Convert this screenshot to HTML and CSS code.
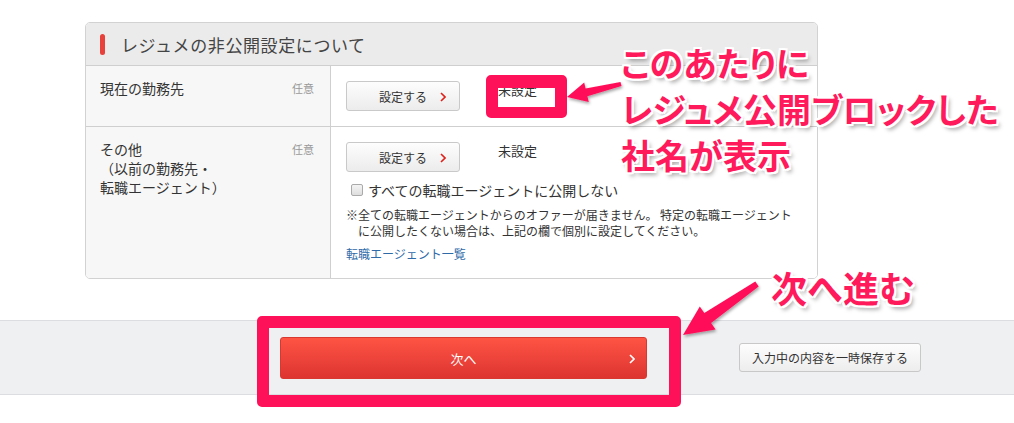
FILE: index.html
```html
<!DOCTYPE html>
<html lang="ja">
<head>
    <meta charset="UTF-8">
    <meta name="viewport" content="width=device-width, initial-scale=1.0">
    <title>レジュメの非公開設定</title>
    <link rel="stylesheet" href="styles.css">
</head>
<body>
    <div class="page">
        <div class="card">
            <div class="card-header">
                <span class="bar"></span>
                <h2>レジュメの非公開設定について</h2>
            </div>
            <div class="row">
                <div class="row-label">
                    <span>現在の勤務先</span>
                    <span class="optional">任意</span>
                </div>
                <div class="row-body">
                    <div class="setting">
                        <button type="button" class="btn-set">設定する
                            <svg class="chev" width="6" height="10" viewBox="0 0 6 10"><polyline points="1,1 5,5 1,9" fill="none" stroke="#e0201a" stroke-width="1.6"/></svg>
                        </button>
                        <span class="status">未設定</span>
                    </div>
                </div>
            </div>
            <div class="row last">
                <div class="row-label">
                    <span>その他<br>（以前の勤務先・<br>転職エージェント）</span>
                    <span class="optional">任意</span>
                </div>
                <div class="row-body">
                    <div class="setting">
                        <button type="button" class="btn-set">設定する
                            <svg class="chev" width="6" height="10" viewBox="0 0 6 10"><polyline points="1,1 5,5 1,9" fill="none" stroke="#e0201a" stroke-width="1.6"/></svg>
                        </button>
                        <span class="status">未設定</span>
                    </div>
                    <label class="check"><span class="box"></span>すべての転職エージェントに公開しない</label>
                    <p class="note">※全ての転職エージェントからのオファーが届きません。 特定の転職エージェント<br>に公開したくない場合は、上記の欄で個別に設定してください。</p>
                    <a href="#" class="agent-link">転職エージェント一覧</a>
                </div>
            </div>
        </div>
    </div>

    <div class="footer-band">
        <button type="button" class="btn-next">次へ
            <svg class="chev-next" width="6" height="10" viewBox="0 0 6 10"><polyline points="1,1 5,5 1,9" fill="none" stroke="#fff" stroke-width="1.6"/></svg>
        </button>
        <button type="button" class="btn-save">入力中の内容を一時保存する</button>
    </div>

    <!-- 注釈 -->
    <div class="mark mark-status"></div>
    <div class="mark mark-next"></div>
    <svg class="arrows" width="1014" height="423" viewBox="0 0 1014 423">
        <defs>
            <filter id="shadow" x="-20%" y="-20%" width="140%" height="140%">
                <feDropShadow dx="1" dy="2" stdDeviation="1.5" flood-color="#000" flood-opacity="0.35"/>
            </filter>
        </defs>
        <polygon filter="url(#shadow)" fill="#ff1159" points="567,97 584.2,82.6 585.6,88.4 620.5,82 621.5,86 587.4,96.2 588.8,102"/>
        <polygon filter="url(#shadow)" fill="#ff1159" points="683,335 699.8,306.5 704.3,313.1 755.3,281.5 758.7,286.5 711.1,322.9 715.6,329.5"/>
    </svg>
    <p class="callout callout-top">このあたりに<br>レジュメ公開ブロックした<br>社名が表示</p>
    <p class="callout callout-next">次へ進む</p>
</body>
</html>
```

FILE: styles.css
```css
/* 全体 */
body {
    margin: 0;
    background-color: white;
    font-family: "Noto Sans CJK JP", "Noto Sans", sans-serif;
    color: #333;
    position: relative;
    width: 1014px;
    height: 423px;
    overflow: hidden;
}
.page {
    padding: 22px 0 0 85px;
    height: 298px;
    box-sizing: border-box;
}
.card {
    width: 733px;
    border: 1px solid #d2d2d2;
    border-radius: 5px;
    box-sizing: border-box;
    overflow: hidden;
}
.card-header {
    display: flex;
    align-items: center;
    height: 42px;
    background-color: #ebebeb;
    border-bottom: 1px solid #cfcfcf;
    padding-left: 14px;
}
.bar {
    width: 5px;
    height: 21px;
    border-radius: 3px;
    background-color: #e8403a;
    margin-right: 16px;
}
.card-header h2 {
    margin: 0;
    font-size: 17px;
    font-weight: normal;
    color: #444;
    letter-spacing: 0.6px;
}
.row {
    display: flex;
    border-bottom: 1px solid #cfcfcf;
}
.row.last {
    border-bottom: none;
}
.row-label {
    width: 245px;
    flex-shrink: 0;
    box-sizing: border-box;
    background-color: #f7f7f7;
    border-right: 1px solid #cfcfcf;
    display: flex;
    justify-content: space-between;
    align-items: flex-start;
    padding: 13px 16px 0 14px;
    font-size: 14px;
    line-height: 19px;
    color: #333;
}
.optional {
    font-size: 11px;
    color: #999;
    line-height: 14px;
    margin-top: 2px;
}
.row-body {
    flex: 1;
    padding: 15px 0 15px 15px;
    background-color: #fff;
}
.row.last .row-body {
    padding-bottom: 16px;
}
.setting {
    display: flex;
    align-items: flex-start;
}
.btn-set {
    position: relative;
    width: 114px;
    height: 30px;
    border: 1px solid #c9c9c9;
    border-radius: 3px;
    background: linear-gradient(#fdfdfd, #ececec);
    font-family: inherit;
    font-size: 12px;
    color: #333;
    padding: 0;
    cursor: pointer;
}
.chev {
    position: absolute;
    right: 13px;
    top: 10px;
}
.status {
    margin-left: 38px;
    font-size: 13px;
    line-height: 18px;
}
.check {
    display: flex;
    align-items: center;
    margin-top: 8px;
    margin-left: 5px;
    font-size: 14px;
    line-height: 20px;
    color: #333;
}
.box {
    width: 10px;
    height: 10px;
    border: 1px solid #aaa;
    border-radius: 2px;
    background: linear-gradient(#f4f4f4, #dedede);
    margin-right: 5px;
}
.note {
    margin: 7px 0 0;
    font-size: 12px;
    line-height: 16px;
    color: #333;
    padding-left: 12px;
    text-indent: -12px;
}
.agent-link {
    display: block;
    margin-top: 7px;
    font-size: 12px;
    line-height: 16px;
    color: #2f6aa8;
    text-decoration: none;
}

/* フッター */
.footer-band {
    display: flex;
    align-items: center;
    height: 73px;
    margin-top: 22px;
    background-color: #eff0f2;
    border-top: 1px solid #dcdde0;
    border-bottom: 1px solid #dcdde0;
    padding-left: 280px;
}
.btn-next {
    position: relative;
    width: 367px;
    height: 42px;
    border: 1px solid #d8382f;
    border-radius: 3px;
    background: linear-gradient(#fe5444, #dd3431);
    color: white;
    font-family: inherit;
    font-size: 13px;
    cursor: pointer;
    margin-top: 1px;
}
.chev-next {
    position: absolute;
    right: 11px;
    top: 16px;
}
.btn-save {
    margin-left: 92px;
    width: 182px;
    height: 29px;
    border: 1px solid #c8c8c8;
    border-radius: 3px;
    background: linear-gradient(#fdfdfd, #ededed);
    font-family: inherit;
    font-size: 12px;
    color: #333;
    cursor: pointer;
}

/* 注釈 */
.mark {
    position: absolute;
    border: 12px solid #ff1159;
    border-radius: 5px;
    box-sizing: border-box;
}
.mark-status {
    left: 486px;
    top: 75px;
    width: 81px;
    height: 43px;
    border-top-width: 13px;
    border-bottom-width: 11px;
}
.mark-next {
    left: 257px;
    top: 316px;
    width: 424px;
    height: 91px;
}
.arrows {
    position: absolute;
    left: 0;
    top: 0;
    pointer-events: none;
}
.callout {
    position: absolute;
    margin: 0;
    font-weight: bold;
    color: #ff1a5c;
    font-size: 34px;
    font-feature-settings: "palt";
    text-shadow:
        2px 0 0 #fff, -2px 0 0 #fff, 0 2px 0 #fff, 0 -2px 0 #fff,
        2px 2px 0 #fff, -2px -2px 0 #fff, 2px -2px 0 #fff, -2px 2px 0 #fff,
        3px 4px 4px rgba(0, 0, 0, 0.35);
    white-space: nowrap;
}
.callout-top {
    left: 621px;
    top: 40px;
    line-height: 46px;
}
.callout-next {
    left: 771px;
    top: 264px;
    line-height: 46px;
    font-size: 36px;
    font-feature-settings: normal;
}
```
